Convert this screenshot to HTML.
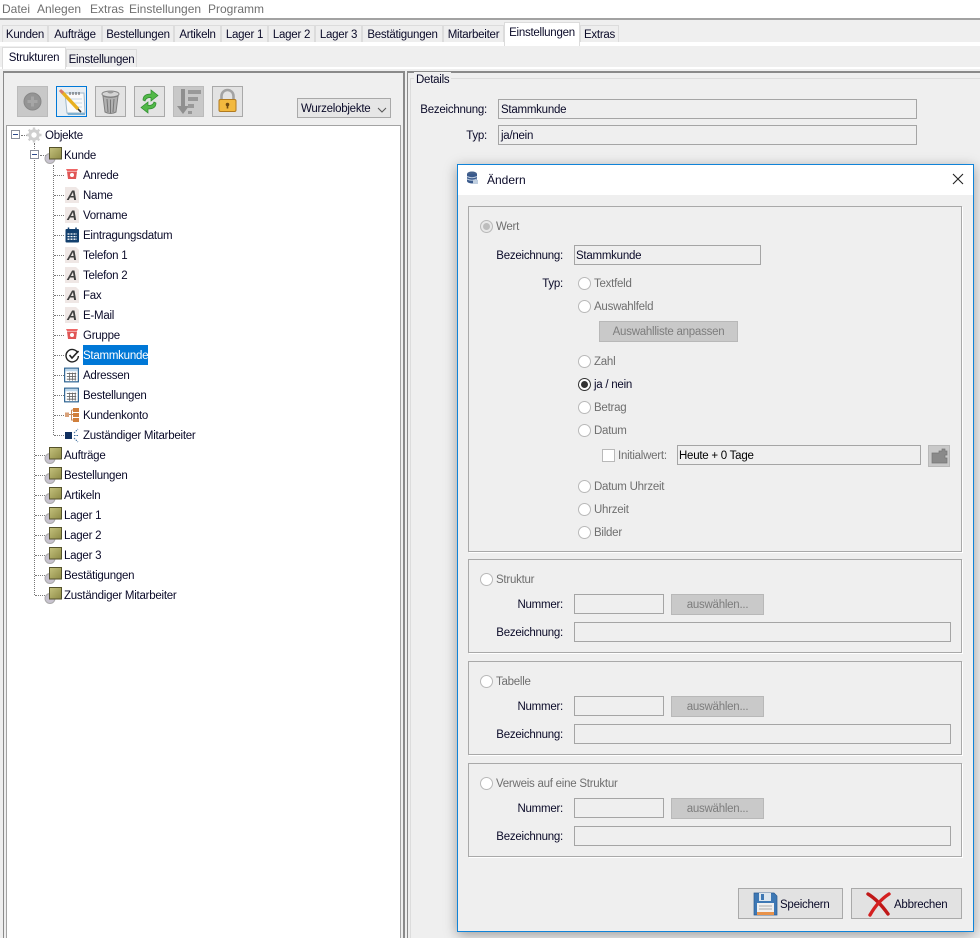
<!DOCTYPE html>
<html lang="de"><head><meta charset="utf-8"><title>Ändern</title>
<style>
html,body{margin:0;padding:0;width:980px;height:938px;overflow:hidden;background:#efefef}
body{position:relative;font-family:"Liberation Sans",sans-serif;font-size:11.5px;letter-spacing:-.25px;color:#0a0a28}
.a,.t{position:absolute}
.t{white-space:nowrap;line-height:16px;height:16px;transform:translateY(1px)}
.r{text-align:right}
.g{color:#6f6f6f}
.m{font-size:12px;letter-spacing:0;top:0}
.tab{position:absolute;top:25px;height:17px;background:#eee;border:1px solid #dcdcdc;border-bottom:0;box-sizing:border-box;text-align:center;line-height:19px;white-space:nowrap}
.f{position:absolute;box-sizing:border-box;border:1px solid #a5a5a5;height:20px;line-height:20px;padding-left:1px;white-space:nowrap}
.b{position:absolute;box-sizing:border-box;background:#c9c9c9;border:1px solid #b8b8b8;color:#7d7d7d;text-align:center;white-space:nowrap}
.gb{position:absolute;left:468px;width:494px;box-sizing:border-box;border:1px solid #a9a9a9;box-shadow:1px 1px 0 #fff}
.rd{position:absolute;width:13px;height:13px;box-sizing:border-box;border:1px solid #b9b9b9;border-radius:50%;background:#fff}
.tb{position:absolute;top:86px;width:31px;height:31px;box-sizing:border-box;border:1px solid #a9a9a9;background:#e3e3e3}
.tb svg,.ic{position:absolute}
.sel{background:#0078d7;color:#fff;position:absolute;left:83px;top:345px;width:65px;height:20px}
.dv{position:absolute;border-left:1px dotted #777}
.dh{position:absolute;border-top:1px dotted #777}
</style></head>
<body>
<svg width="0" height="0" style="position:absolute">
<defs>
<linearGradient id="ol" x1="0" y1="0" x2="1" y2="1"><stop offset="0" stop-color="#c5c27e"/><stop offset="1" stop-color="#8d8a45"/></linearGradient>
<symbol id="obj" viewBox="0 0 20 20"><circle cx="6" cy="12.5" r="5" fill="#c8c3cf" stroke="#aaa"/><rect x="5.5" y="1.5" width="12" height="11.5" fill="url(#ol)" stroke="#55522a"/></symbol>
<symbol id="A" viewBox="0 0 16 16"><path d="M1 0H12L15 3V16H1Z" fill="#efe7e5"/><text x="8" y="13" text-anchor="middle" font-family="Liberation Sans,sans-serif" font-style="italic" font-weight="bold" font-size="14" letter-spacing="0" fill="#404040">A</text></symbol>
<symbol id="sel" viewBox="0 0 16 16"><path d="M2 3H14L13 5H3Z" fill="#e66"/><path d="M3 5.5H13L12 13H4Z" fill="#e05555"/><circle cx="8" cy="9" r="2" fill="#fff"/></symbol>
<symbol id="grid" viewBox="0 0 16 16"><rect x=".7" y=".7" width="14.6" height="14.6" fill="#fff" stroke="#1f5a8c" stroke-width="1.2"/><rect x="1.5" y="1.5" width="13" height="2.5" fill="#bcd6ea"/><path d="M3 6.5H13M3 9.5H13M3 12.5H13M6 5.5V14M9 5.5V14M12 5.5V14" stroke="#666" stroke-width=".9" fill="none"/></symbol>
</defs>
</svg>

<!-- menu -->
<div class="a" style="left:0;top:0;width:980px;height:19px;background:#fff"></div>
<div class="a" style="left:0;top:18px;width:980px;height:2px;background:#a2a2a2"></div>
<div class="t g m" style="left:2px">Datei</div>
<div class="t g m" style="left:37px">Anlegen</div>
<div class="t g m" style="left:90px">Extras</div>
<div class="t g m" style="left:129px">Einstellungen</div>
<div class="t g m" style="left:208px">Programm</div>

<!-- top tabs -->
<div class="a" style="left:0;top:42px;width:980px;height:4px;background:#fff"></div>
<div class="tab" style="left:2px;width:46px">Kunden</div>
<div class="tab" style="left:48px;width:54px">Aufträge</div>
<div class="tab" style="left:102px;width:72px">Bestellungen</div>
<div class="tab" style="left:174px;width:47px">Artikeln</div>
<div class="tab" style="left:221px;width:47px">Lager 1</div>
<div class="tab" style="left:268px;width:47px">Lager 2</div>
<div class="tab" style="left:315px;width:47px">Lager 3</div>
<div class="tab" style="left:362px;width:81px">Bestätigungen</div>
<div class="tab" style="left:443px;width:61px">Mitarbeiter</div>
<div class="tab" style="left:504px;top:22px;width:76px;height:24px;background:#fff;line-height:21px">Einstellungen</div>
<div class="tab" style="left:580px;width:39px">Extras</div>

<!-- second tabs -->
<div class="a" style="left:0;top:67px;width:980px;height:2px;background:#fff"></div>
<div class="tab" style="left:2px;top:47px;width:64px;height:22px;background:#fff;line-height:20px">Strukturen</div>
<div class="tab" style="left:66px;top:49px;width:71px;height:18px;line-height:21px">Einstellungen</div>

<!-- left panel -->
<div class="a" style="left:3px;top:71px;width:402px;height:880px;box-sizing:border-box;border:1px solid #8a8a8a;border-right:2px solid #8a8a8a;border-top:2px solid #8a8a8a"></div>
<!-- right panel -->
<div class="a" style="left:407px;top:71px;width:580px;height:880px;box-sizing:border-box;border:1px solid #8a8a8a;border-top:2px solid #8a8a8a"></div>
<div class="a" style="left:410px;top:78px;width:570px;height:1px;background:#dcdcdc"></div>
<div class="a" style="left:410px;top:78px;width:1px;height:860px;background:#dcdcdc"></div>
<div class="t" style="left:414px;top:71px;padding:0 2px;background:#efefef">Details</div>
<div class="t r" style="left:400px;top:101px;width:87px">Bezeichnung:</div>
<div class="t r" style="left:400px;top:127px;width:87px">Typ:</div>
<div class="f" style="left:498px;top:99px;width:419px;padding-left:2px">Stammkunde</div>
<div class="f" style="left:498px;top:125px;width:419px;padding-left:2px">ja/nein</div>

<!-- toolbar -->
<div class="tb" style="left:17px;background:#c8c8c8;border-color:#bbb"><svg width="29" height="29" style="left:0;top:0"><circle cx="14.5" cy="14.5" r="8.5" fill="#949494" stroke="#888"/><path d="M14.5 9.5V19.5M9.5 14.5H19.5" stroke="#a6a6a6" stroke-width="3"/></svg></div>
<div class="tb" style="left:56px;border-color:#0078d7;background:#e8eef3"><svg width="29" height="29" style="left:0;top:0"><path d="M8 6H27L28 26H10Z" fill="#fafafa" stroke="#9fb8cc"/><path d="M10 26H28V28H11Z" fill="#7fb0d0"/><path d="M13 5V8M16 5V8M19 5V8M22 5V8" stroke="#555"/><path d="M13 12H25M15 16H25M18 20H25" stroke="#c8d8e4"/><path d="M4.5 4.5L21 22" stroke="#e8b020" stroke-width="3.4"/><path d="M3 3L6 6" stroke="#d9786a" stroke-width="3"/><path d="M21 22L24 25" stroke="#333" stroke-width="1.6"/></svg></div>
<div class="tb" style="left:95px"><svg width="29" height="29" style="left:0;top:0"><ellipse cx="14.5" cy="7" rx="8.5" ry="3" fill="#d5d5d5" stroke="#888"/><ellipse cx="14.5" cy="5" rx="3" ry="1.5" fill="#999"/><path d="M7 9L9 25Q14.5 28 20 25L22 9Q14.5 12 7 9Z" fill="#b0b0b0" stroke="#808080"/><path d="M11 12L12 25M14.5 12.5V26M18 12L17 25" stroke="#777" fill="none"/></svg></div>
<div class="tb" style="left:134px"><svg width="29" height="29" style="left:0;top:0"><path d="M8 13C8 9 11 7 16 7V3L23 8.5L16 14V10.5C13 10.5 11 11 10 14Z" fill="#52b848" stroke="#2f8c2f" stroke-width=".7"/><path d="M21 16C21 20 18 22 13 22V26L6 20.5L13 15V18.5C16 18.5 18 18 19 15Z" fill="#52b848" stroke="#2f8c2f" stroke-width=".7"/></svg></div>
<div class="tb" style="left:173px;background:#c8c8c8;border-color:#bbb"><svg width="29" height="29" style="left:0;top:0"><path d="M7 2H11V19H15L9 27L3 19H7Z" fill="#8f8f8f"/><path d="M14 3H27V7H14ZM14 10H24V14H14ZM14 17H20V21H14ZM14 24H18V27H14Z" fill="#999"/></svg></div>
<div class="tb" style="left:212px"><svg width="29" height="29" style="left:0;top:0"><path d="M8.5 13V9A6 6 0 0 1 20.5 9V13" fill="none" stroke="#a3a3a3" stroke-width="2.6"/><rect x="6" y="12.5" width="17" height="12" rx="1.5" fill="#f3b93e" stroke="#b07a20"/><circle cx="14.5" cy="17.5" r="1.8" fill="#704a10"/><rect x="13.7" y="17.5" width="1.6" height="4" fill="#704a10"/></svg></div>
<div class="a" style="left:297px;top:98px;width:94px;height:20px;box-sizing:border-box;border:1px solid #a9a9a9;background:#e6e6e6;line-height:20px;padding-left:3px">Wurzelobjekte<svg class="ic" style="left:79px;top:8px" width="10" height="6"><path d="M1 1L5 5L9 1" fill="none" stroke="#555"/></svg></div>

<!-- tree -->
<div class="a" style="left:6px;top:125px;width:395px;height:820px;box-sizing:border-box;background:#fff;border:1px solid #a3a3a3"></div>
<div class="dv" style="left:34px;top:143px;height:452px"></div>
<div class="dv" style="left:53px;top:165px;height:270px"></div>
<div class="dh" style="left:21px;top:135px;width:6px"></div>
<div class="dh" style="left:40px;top:155px;width:6px"></div>
<div class="dh" style="left:54px;top:175px;width:10px"></div><div class="dh" style="left:54px;top:195px;width:10px"></div><div class="dh" style="left:54px;top:215px;width:10px"></div><div class="dh" style="left:54px;top:235px;width:10px"></div><div class="dh" style="left:54px;top:255px;width:10px"></div><div class="dh" style="left:54px;top:275px;width:10px"></div><div class="dh" style="left:54px;top:295px;width:10px"></div><div class="dh" style="left:54px;top:315px;width:10px"></div><div class="dh" style="left:54px;top:335px;width:10px"></div><div class="dh" style="left:54px;top:355px;width:10px"></div><div class="dh" style="left:54px;top:375px;width:10px"></div><div class="dh" style="left:54px;top:395px;width:10px"></div><div class="dh" style="left:54px;top:415px;width:10px"></div><div class="dh" style="left:54px;top:435px;width:10px"></div>
<div class="dh" style="left:35px;top:455px;width:10px"></div><div class="dh" style="left:35px;top:475px;width:10px"></div><div class="dh" style="left:35px;top:495px;width:10px"></div><div class="dh" style="left:35px;top:515px;width:10px"></div><div class="dh" style="left:35px;top:535px;width:10px"></div><div class="dh" style="left:35px;top:555px;width:10px"></div><div class="dh" style="left:35px;top:575px;width:10px"></div><div class="dh" style="left:35px;top:595px;width:10px"></div>

<svg class="ic" style="left:11px;top:130px" width="10" height="10"><rect x=".5" y=".5" width="8" height="8" fill="#fff" stroke="#8a8f9c"/><path d="M2 4.5H7" stroke="#2c4a8c"/></svg>
<svg class="ic" style="left:30px;top:150px" width="10" height="10"><rect x=".5" y=".5" width="8" height="8" fill="#fff" stroke="#8a8f9c"/><path d="M2 4.5H7" stroke="#2c4a8c"/></svg>
<svg class="ic" style="left:26px;top:127px" width="16" height="16"><circle cx="8" cy="8" r="4.2" fill="none" stroke="#cfcfcf" stroke-width="3"/><path d="M8 .5V3.5M8 12.5V15.5M.5 8H3.5M12.5 8H15.5M2.7 2.7L4.8 4.8M11.2 11.2L13.3 13.3M2.7 13.3L4.8 11.2M11.2 4.8L13.3 2.7" stroke="#cfcfcf" stroke-width="2.4"/></svg>
<div class="t" style="left:45px;top:127px">Objekte</div>

<svg class="ic" style="left:44px;top:146px" width="20" height="20"><use href="#obj"/></svg><div class="t" style="left:64px;top:147px">Kunde</div>
<svg class="ic" style="left:64px;top:166px" width="16" height="16"><use href="#sel"/></svg><div class="t" style="left:83px;top:167px">Anrede</div>
<svg class="ic" style="left:64px;top:187px" width="16" height="16"><use href="#A"/></svg><div class="t" style="left:83px;top:187px">Name</div>
<svg class="ic" style="left:64px;top:207px" width="16" height="16"><use href="#A"/></svg><div class="t" style="left:83px;top:207px">Vorname</div>
<svg class="ic" style="left:65px;top:227px" width="15" height="16"><rect x=".5" y="2" width="13.5" height="13.5" rx="1" fill="#123f6d"/><path d="M3.5 .5V3.5M11 .5V3.5" stroke="#123f6d" stroke-width="1.5"/><path d="M2.5 7H12M2.5 9.6H12M2.5 12.2H12" stroke="#fff" stroke-width="1.3" stroke-dasharray="2 1"/></svg><div class="t" style="left:83px;top:227px">Eintragungsdatum</div>
<svg class="ic" style="left:64px;top:247px" width="16" height="16"><use href="#A"/></svg><div class="t" style="left:83px;top:247px">Telefon 1</div>
<svg class="ic" style="left:64px;top:267px" width="16" height="16"><use href="#A"/></svg><div class="t" style="left:83px;top:267px">Telefon 2</div>
<svg class="ic" style="left:64px;top:287px" width="16" height="16"><use href="#A"/></svg><div class="t" style="left:83px;top:287px">Fax</div>
<svg class="ic" style="left:64px;top:307px" width="16" height="16"><use href="#A"/></svg><div class="t" style="left:83px;top:307px">E-Mail</div>
<svg class="ic" style="left:64px;top:326px" width="16" height="16"><use href="#sel"/></svg><div class="t" style="left:83px;top:327px">Gruppe</div>
<svg class="ic" style="left:65px;top:348px" width="15" height="15"><path d="M12.8 5A6.2 6.2 0 1 0 13.4 8" fill="none" stroke="#222" stroke-width="1.4"/><path d="M4.5 7L7 10L13.5 3" fill="none" stroke="#222" stroke-width="1.6"/></svg>
<div class="sel"></div><div class="t" style="left:83px;top:347px;color:#fff">Stammkunde</div>
<svg class="ic" style="left:64px;top:367px" width="15" height="16"><use href="#grid"/></svg><div class="t" style="left:83px;top:367px">Adressen</div>
<svg class="ic" style="left:64px;top:387px" width="15" height="16"><use href="#grid"/></svg><div class="t" style="left:83px;top:387px">Bestellungen</div>
<svg class="ic" style="left:65px;top:407px" width="14" height="16"><rect x="0" y="5.5" width="4" height="4.5" fill="#d9a27a"/><rect x="8" y="1" width="6" height="4" fill="#d07f3c"/><rect x="8" y="6" width="6" height="4" fill="#d07f3c"/><rect x="8" y="11" width="6" height="4" fill="#d07f3c"/><path d="M4 7.5H8M6.5 3V13H8M6.5 3H8" stroke="#c98a5a" fill="none"/></svg><div class="t" style="left:83px;top:407px">Kundenkonto</div>
<svg class="ic" style="left:65px;top:427px" width="15" height="16"><rect x="0" y="5" width="7" height="7" fill="#10305f"/><path d="M9 6L13 2M9 8.5H13M9 11L13 15" stroke="#3c6c9c" stroke-dasharray="1.5 1" fill="none"/></svg><div class="t" style="left:83px;top:427px">Zuständiger Mitarbeiter</div>

<svg class="ic" style="left:44px;top:446px" width="20" height="20"><use href="#obj"/></svg><div class="t" style="left:64px;top:447px">Aufträge</div>
<svg class="ic" style="left:44px;top:466px" width="20" height="20"><use href="#obj"/></svg><div class="t" style="left:64px;top:467px">Bestellungen</div>
<svg class="ic" style="left:44px;top:486px" width="20" height="20"><use href="#obj"/></svg><div class="t" style="left:64px;top:487px">Artikeln</div>
<svg class="ic" style="left:44px;top:506px" width="20" height="20"><use href="#obj"/></svg><div class="t" style="left:64px;top:507px">Lager 1</div>
<svg class="ic" style="left:44px;top:526px" width="20" height="20"><use href="#obj"/></svg><div class="t" style="left:64px;top:527px">Lager 2</div>
<svg class="ic" style="left:44px;top:546px" width="20" height="20"><use href="#obj"/></svg><div class="t" style="left:64px;top:547px">Lager 3</div>
<svg class="ic" style="left:44px;top:566px" width="20" height="20"><use href="#obj"/></svg><div class="t" style="left:64px;top:567px">Bestätigungen</div>
<svg class="ic" style="left:44px;top:586px" width="20" height="20"><use href="#obj"/></svg><div class="t" style="left:64px;top:587px">Zuständiger Mitarbeiter</div>

<!-- dialog -->
<div class="a" style="left:457px;top:164px;width:517px;height:768px;box-sizing:border-box;background:#efefef;border:1px solid #1083d8;box-shadow:0 3px 12px rgba(0,0,0,.35)"></div>
<div class="a" style="left:458px;top:165px;width:515px;height:30px;background:#fff"></div>
<svg class="ic" style="left:466px;top:171px" width="13" height="14"><ellipse cx="6" cy="3" rx="5" ry="2.5" fill="#44618c"/><rect x="1" y="3" width="10" height="7" fill="#3a5a8c"/><ellipse cx="6" cy="10" rx="5" ry="2.5" fill="#3a5a8c"/><path d="M1 5.5Q6 8 11 5.5M1 8Q6 10.5 11 8" stroke="#b8c8dc" fill="none"/><rect x="7" y="9" width="5" height="4" fill="#c0cfe0"/></svg>
<div class="t" style="left:487px;top:171px;font-size:12px;letter-spacing:0">Ändern</div>
<svg class="ic" style="left:952px;top:173px" width="12" height="12"><path d="M1 1L11 11M11 1L1 11" stroke="#222" stroke-width="1.1"/></svg>

<div class="gb" style="top:206px;height:346px"></div>
<div class="gb" style="top:559px;height:94px"></div>
<div class="gb" style="top:661px;height:94px"></div>
<div class="gb" style="top:763px;height:94px"></div>

<div class="rd" style="left:480px;top:220px;background:#e8e8e8"></div><div class="a" style="left:483px;top:223px;width:7px;height:7px;border-radius:50%;background:#bdbdbd"></div>
<div class="t g" style="left:496px;top:218px">Wert</div>
<div class="t r" style="left:470px;top:247px;width:93px">Bezeichnung:</div>
<div class="f" style="left:574px;top:245px;width:187px">Stammkunde</div>
<div class="t r" style="left:470px;top:275px;width:93px">Typ:</div>

<div class="rd" style="left:578px;top:277px"></div><div class="t g" style="left:594px;top:275px">Textfeld</div>
<div class="rd" style="left:578px;top:300px"></div><div class="t g" style="left:594px;top:298px">Auswahlfeld</div>
<div class="b" style="left:599px;top:321px;width:139px;height:21px;line-height:21px">Auswahlliste anpassen</div>
<div class="rd" style="left:578px;top:355px"></div><div class="t g" style="left:594px;top:353px">Zahl</div>
<div class="rd" style="left:578px;top:378px;border-color:#333;background:#fff"></div><div class="a" style="left:581px;top:381px;width:7px;height:7px;border-radius:50%;background:#333"></div><div class="t" style="left:594px;top:376px">ja / nein</div>
<div class="rd" style="left:578px;top:401px"></div><div class="t g" style="left:594px;top:399px">Betrag</div>
<div class="rd" style="left:578px;top:424px"></div><div class="t g" style="left:594px;top:422px">Datum</div>
<div class="a" style="left:602px;top:449px;width:13px;height:13px;box-sizing:border-box;border:1px solid #b9b9b9;background:#fff"></div>
<div class="t g" style="left:618px;top:447px">Initialwert:</div>
<div class="f" style="left:677px;top:445px;width:244px;color:#000">Heute + 0 Tage</div>
<div class="b" style="left:928px;top:445px;width:22px;height:22px"><svg class="ic" style="left:2px;top:2px" width="17" height="17"><path d="M1 5H8V3H11V1H14V3H16V7H14V10H16V15H1Z" fill="#8a8a8a" stroke="#777" stroke-width=".7"/></svg></div>
<div class="rd" style="left:578px;top:480px"></div><div class="t g" style="left:594px;top:478px">Datum Uhrzeit</div>
<div class="rd" style="left:578px;top:503px"></div><div class="t g" style="left:594px;top:501px">Uhrzeit</div>
<div class="rd" style="left:578px;top:526px"></div><div class="t g" style="left:594px;top:524px">Bilder</div>

<!-- Struktur -->
<div class="rd" style="left:480px;top:573px"></div><div class="t g" style="left:496px;top:571px">Struktur</div>
<div class="t r" style="left:470px;top:596px;width:93px">Nummer:</div>
<div class="f" style="left:574px;top:594px;width:90px"></div>
<div class="b" style="left:671px;top:594px;width:93px;height:21px;line-height:21px">auswählen...</div>
<div class="t r" style="left:470px;top:624px;width:93px">Bezeichnung:</div>
<div class="f" style="left:574px;top:622px;width:377px"></div>
<!-- Tabelle -->
<div class="rd" style="left:480px;top:675px"></div><div class="t g" style="left:496px;top:673px">Tabelle</div>
<div class="t r" style="left:470px;top:698px;width:93px">Nummer:</div>
<div class="f" style="left:574px;top:696px;width:90px"></div>
<div class="b" style="left:671px;top:696px;width:93px;height:21px;line-height:21px">auswählen...</div>
<div class="t r" style="left:470px;top:726px;width:93px">Bezeichnung:</div>
<div class="f" style="left:574px;top:724px;width:377px"></div>
<!-- Verweis -->
<div class="rd" style="left:480px;top:777px"></div><div class="t g" style="left:496px;top:775px">Verweis auf eine Struktur</div>
<div class="t r" style="left:470px;top:800px;width:93px">Nummer:</div>
<div class="f" style="left:574px;top:798px;width:90px"></div>
<div class="b" style="left:671px;top:798px;width:93px;height:21px;line-height:21px">auswählen...</div>
<div class="t r" style="left:470px;top:828px;width:93px">Bezeichnung:</div>
<div class="f" style="left:574px;top:826px;width:377px"></div>

<!-- buttons -->
<div class="a" style="left:738px;top:888px;width:105px;height:31px;box-sizing:border-box;border:1px solid #a9a9a9;background:#e2e2e2;line-height:32px;padding-left:41px">Speichern
<svg class="ic" style="left:14px;top:2px" width="25" height="25"><path d="M1 2H21L24 5V24H1Z" fill="#3e78b4" stroke="#2a5a90" stroke-width=".7"/><rect x="6" y="2" width="12" height="8" fill="#dce6ee"/><rect x="8" y="3" width="3" height="6" fill="#3e78b4"/><rect x="4" y="12" width="17" height="12" fill="#f0f0f0"/><path d="M6 15H19M6 18H19" stroke="#aaa"/><rect x="4" y="21" width="17" height="3" fill="#e8924a"/></svg></div>
<div class="a" style="left:851px;top:888px;width:111px;height:31px;box-sizing:border-box;border:1px solid #a9a9a9;background:#e2e2e2;line-height:32px;padding-left:42px">Abbrechen
<svg class="ic" style="left:14px;top:3px" width="25" height="25"><path d="M2 2Q12 8 22 22" stroke="#c01818" stroke-width="3.4" fill="none" stroke-linecap="round"/><path d="M23 2Q12 9 4 23" stroke="#d42020" stroke-width="3.4" fill="none" stroke-linecap="round"/></svg></div>
</body></html>
